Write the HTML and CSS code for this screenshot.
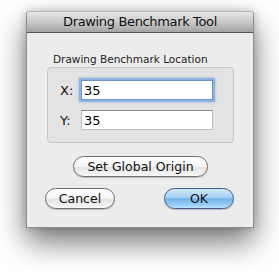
FILE: index.html
```html
<!DOCTYPE html>
<html lang="en">
<head>
    <meta charset="UTF-8">
    <title>Drawing Benchmark Tool</title>
    <link rel="stylesheet" href="styles.css">
</head>
<body>
<div class="window">
    <div class="titlebar">Drawing Benchmark Tool</div>
    <div class="content">
        <div class="group-label">Drawing Benchmark Location</div>
        <div class="group">
            <div class="row">
                <label for="x">X:</label>
                <input type="text" id="x" class="field focused" value="35">
            </div>
            <div class="row">
                <label for="y">Y:</label>
                <input type="text" id="y" class="field" value="35">
            </div>
        </div>
        <button class="btn origin">Set Global Origin</button>
        <div class="actions">
            <button class="btn">Cancel</button>
            <button class="btn default">OK</button>
        </div>
    </div>
</div>
</body>
</html>
```

FILE: styles.css
```css
body {
    box-sizing: border-box;
    min-height: 100vh;
    margin: 0;
    padding: 11px 0 0 26px;
    background: #fff;
    font-family: "DejaVu Sans", Verdana, sans-serif;
    color: #111;
}
.window {
    box-sizing: border-box;
    width: 228px;
    height: 217px;
    background: #ececec;
    border: 1px solid #8f8f8f;
    border-top-color: #b5b5b5;
    border-radius: 4px 4px 0 0;
    box-shadow: 0 14px 30px rgba(0, 0, 0, 0.55), 0 0 8px rgba(0, 0, 0, 0.2);
    display: flex;
    flex-direction: column;
}
.titlebar {
    height: 20px;
    line-height: 20px;
    text-align: center;
    font-size: 13px;
    letter-spacing: -0.35px;
    color: #111;
    background: linear-gradient(#e8e8e8, #c6c6c6 55%, #a4a4a4);
    border-bottom: 1px solid #555;
    border-radius: 3px 3px 0 0;
}
.content {
    display: flex;
    flex-direction: column;
    padding: 0 19px 0 20px;
}
.group-label {
    font-size: 10.5px;
    line-height: 13px;
    margin: 20px 0 1px 6px;
    color: #222;
}
.group {
    box-sizing: border-box;
    height: 76px;
    padding: 12px 0 0 12px;
    background: #e3e3e3;
    border: 1px solid #c6c6c6;
    border-radius: 4px;
    display: flex;
    flex-direction: column;
    gap: 10px;
}
.row {
    display: flex;
    align-items: center;
    gap: 8px;
}
.row label {
    width: 13px;
    font-size: 13px;
}
.field {
    box-sizing: border-box;
    width: 132px;
    height: 20px;
    margin: 0;
    padding: 0 2px;
    font-family: "DejaVu Sans", Verdana, sans-serif;
    font-size: 13px;
    color: #000;
    background: #fff;
    border: 1px solid #bcbcbc;
    border-top-color: #8c8c8c;
    outline: none;
}
.field.focused {
    border-color: #6f94c4;
    box-shadow: 0 0 0 2px #8db3e0, 0 0 3px 2px rgba(110, 160, 220, 0.6);
}
.btn {
    box-sizing: border-box;
    height: 21px;
    padding: 0;
    font-family: "DejaVu Sans", Verdana, sans-serif;
    font-size: 12.5px;
    color: #111;
    background: linear-gradient(#ffffff, #f3f3f3 50%, #e2e2e2 51%, #f7f7f7);
    border: 1px solid #6e6e6e;
    border-radius: 11px;
    box-shadow: 0 1px 1px rgba(0, 0, 0, 0.2);
}
.origin {
    width: 135px;
    margin: 13px 0 0 26px;
}
.actions {
    display: flex;
    justify-content: space-between;
    margin: 11px 0 0 -2px;
}
.actions .btn {
    width: 70px;
}
.btn.default {
    background: linear-gradient(#d3e9fc, #a4cff5 45%, #76b4ea 52%, #9acdf6 85%, #c4e4fc);
    border-color: #3f5f8c;
}
```
